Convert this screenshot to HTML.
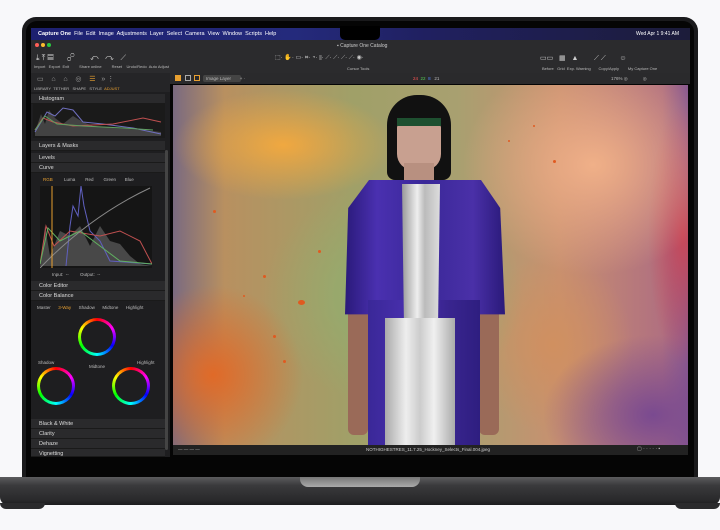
<!DOCTYPE html><html><head><style>
*{margin:0;padding:0;box-sizing:border-box}
body{width:720px;height:530px;background:#f8f8fa;position:relative;overflow:hidden;font-family:"Liberation Sans",sans-serif;color:#ccc}
.a{position:absolute}
.t{position:absolute;font-size:5px;color:#bbb;white-space:nowrap}
.sec{position:absolute;left:31px;width:134px;height:10px;background:#2a2a2c;border-bottom:1px solid #1a1a1a;font-size:5.5px;color:#ddd;padding-left:8px;line-height:10px}
.dot{position:absolute;border-radius:50%;background:#e05a20}
</style></head><body>
<!-- lid -->
<div class="a" style="left:22px;top:17px;width:676px;height:462px;background:#1a1a1c;border-radius:14px 14px 0 0"></div>
<div class="a" style="left:26px;top:21px;width:668px;height:456px;background:#050505;border-radius:11px 11px 0 0"></div>
<!-- base -->
<div class="a" style="left:0;top:477px;width:720px;height:28px;background:linear-gradient(#5c5c5e,#3a3a3c 30%,#2a2a2c 80%,#1c1c1e);border-radius:0 0 8px 8px"></div>
<div class="a" style="left:300px;top:477px;width:120px;height:10px;background:linear-gradient(#777,#aaa);border-radius:0 0 8px 8px"></div>
<div class="a" style="left:0;top:503px;width:45px;height:6px;background:#2a2a2c;border-radius:0 0 6px 6px"></div>
<div class="a" style="left:675px;top:503px;width:45px;height:6px;background:#2a2a2c;border-radius:0 0 6px 6px"></div>
<!-- menu bar -->
<div class="a" style="left:31px;top:28px;width:659px;height:12px;background:linear-gradient(90deg,#1d2070,#242a7c 40%,#202060 60%,#1c1c3a)"></div>
<div class="t" style="left:38px;top:31px;color:#fff;font-size:5.5px"> <b>Capture One</b>&nbsp; File&nbsp; Edit&nbsp; Image&nbsp; Adjustments&nbsp; Layer&nbsp; Select&nbsp; Camera&nbsp; View&nbsp; Window&nbsp; Scripts&nbsp; Help</div>
<div class="a" style="left:340px;top:26px;width:40px;height:14px;background:#000;border-radius:0 0 5px 5px"></div>
<div class="t" style="left:636px;top:31px;color:#fff;font-size:5px">Wed Apr 1 9:41 AM</div>
<!-- toolbar -->
<div class="a" style="left:31px;top:40px;width:659px;height:33px;background:#2b2b2d"></div>
<div class="a" style="left:35px;top:43px;width:4px;height:4px;border-radius:2px;background:#fe5f57"></div>
<div class="a" style="left:41px;top:43px;width:4px;height:4px;border-radius:2px;background:#febc2e"></div>
<div class="a" style="left:47px;top:43px;width:4px;height:4px;border-radius:2px;background:#28c840"></div>
<div class="t" style="left:337px;top:43px;color:#ccc">▪ Capture One Catalog</div>
<div class="t" style="left:34px;top:64px;font-size:4px">Import&nbsp;&nbsp; Export&nbsp; Exit&nbsp;&nbsp;&nbsp;&nbsp;&nbsp;&nbsp;&nbsp;&nbsp; Share online&nbsp;&nbsp;&nbsp;&nbsp;&nbsp;&nbsp;&nbsp;&nbsp; Reset&nbsp;&nbsp;&nbsp; Undo/Redo&nbsp; Auto Adjust</div>
<div class="t" style="left:36px;top:53px;font-size:8px;color:#ddd">⤓ ⤒ ▤&nbsp;&nbsp;&nbsp;&nbsp;&nbsp; ☍&nbsp;&nbsp;&nbsp;&nbsp;&nbsp;&nbsp; ↶&nbsp;&nbsp; ↷&nbsp;&nbsp; ⟋</div>
<div class="t" style="left:275px;top:54px;font-size:6px;color:#ccc">⬚· <span style="color:#f0a020">✋</span>· ▭· ⌗· ◔· ⫴· ⟋· ⟋· ⟋· ⟋· ◉·</div>
<div class="t" style="left:347px;top:66px;font-size:4px">Cursor Tools</div>
<div class="t" style="left:540px;top:54px;font-size:7px;color:#ccc">▭▭&nbsp;&nbsp; ▦&nbsp;&nbsp; ▲&nbsp;&nbsp;&nbsp;&nbsp;&nbsp;&nbsp;&nbsp; ⟋ ⟋&nbsp;&nbsp;&nbsp;&nbsp;&nbsp;&nbsp; ☺</div>
<div class="t" style="left:542px;top:66px;font-size:4px">Before&nbsp;&nbsp; Grid&nbsp; Exp. Warning&nbsp;&nbsp;&nbsp;&nbsp;&nbsp;&nbsp; Copy/Apply&nbsp;&nbsp;&nbsp;&nbsp;&nbsp;&nbsp;&nbsp; My Capture One</div>
<!-- tool tabs -->
<div class="a" style="left:31px;top:73px;width:139px;height:19px;background:#252527"></div>
<div class="t" style="left:34px;top:86px;font-size:4px">LIBRARY&nbsp; TETHER&nbsp;&nbsp; SHAPE&nbsp;&nbsp; STYLE&nbsp; <span style="color:#e8a030">ADJUST</span></div>
<div class="t" style="left:37px;top:75px;font-size:7px;color:#999">▭&nbsp;&nbsp;&nbsp; ⌂&nbsp;&nbsp;&nbsp; ⌂&nbsp;&nbsp;&nbsp; ◎&nbsp;&nbsp;&nbsp; <span style="color:#e8a030">☰</span>&nbsp;&nbsp; » ⋮</div>
<!-- viewer strip -->
<div class="a" style="left:170px;top:73px;width:520px;height:11px;background:#2a2a2c"></div>
<div class="a" style="left:175px;top:75px;width:6px;height:6px;background:#e8a030"></div>
<div class="a" style="left:185px;top:75px;width:6px;height:6px;border:1px solid #aaa"></div>
<div class="a" style="left:194px;top:75px;width:6px;height:6px;border:1px solid #e8a030"></div>
<div class="a" style="left:203px;top:75px;width:38px;height:7px;background:#444;border-radius:2px"></div>
<div class="t" style="left:206px;top:76px;font-size:4.5px">Image Layer&nbsp;&nbsp;&nbsp;&nbsp;&nbsp;&nbsp; + ·</div>
<div class="t" style="left:413px;top:76px;font-size:4.5px"><span style="color:#f55">24</span>&nbsp; <span style="color:#5c5">22</span>&nbsp; <span style="color:#58f">8</span>&nbsp;&nbsp; 21</div>
<div class="t" style="left:611px;top:76px;font-size:4.5px">176% ◎&nbsp;&nbsp;&nbsp;&nbsp;&nbsp;&nbsp;&nbsp;&nbsp;&nbsp;&nbsp;&nbsp; ◎</div>
<!-- left panel -->
<div class="a" style="left:31px;top:92px;width:139px;height:365px;background:#1e1e20"></div>
<div class="sec" style="top:94px">Histogram</div>
<svg class="a" style="left:33px;top:104px" width="132" height="34"><rect width="132" height="34" fill="#1a1a1a"/>
<path d="M2 28 L8 10 L12 20 L16 6 L22 14 L30 20 L40 12 L50 18 L60 22 L80 24 L110 26 L128 28 V32 H2Z" fill="#555" opacity=".7"/>
<path d="M2 28 L14 8 L22 12 L30 4 L40 6 L50 18 L70 20 L100 24 L128 30" stroke="#7070c0" fill="none"/>
<path d="M2 26 L10 14 L20 18 L40 22 L80 20 L110 14 L128 18" stroke="#c05050" fill="none"/>
<path d="M2 26 L12 12 L24 20 L50 22 L90 24 L120 26" stroke="#60a060" fill="none"/></svg>
<div class="sec" style="top:141px">Layers &amp; Masks</div>
<div class="sec" style="top:153px">Levels</div>
<div class="sec" style="top:163px">Curve</div>
<div class="t" style="left:43px;top:177px;font-size:4.5px"><span style="color:#e8a030">RGB</span>&nbsp;&nbsp;&nbsp;&nbsp;&nbsp;&nbsp;&nbsp;&nbsp; Luma&nbsp;&nbsp;&nbsp;&nbsp;&nbsp;&nbsp;&nbsp; Red&nbsp;&nbsp;&nbsp;&nbsp;&nbsp;&nbsp;&nbsp; Green&nbsp;&nbsp;&nbsp;&nbsp;&nbsp;&nbsp; Blue</div>
<svg class="a" style="left:40px;top:186px" width="112" height="82"><rect width="112" height="82" fill="#151515"/>
<path d="M0 80 L5 40 L10 70 L20 45 L30 50 L40 40 L50 60 L60 40 L70 55 L80 58 L90 70 L100 78 L112 80Z" fill="#555" opacity=".8"/>
<path d="M26 80 L30 40 L33 20 L38 30 L41 0 L44 20 L50 45 L60 55 L70 75 L112 78" stroke="#6060c0" fill="none"/>
<path d="M0 78 L6 40 L14 60 L30 45 L60 50 L80 45 L100 55 L112 78" stroke="#c05050" fill="none"/>
<path d="M0 78 L8 42 L20 55 L40 45 L60 60 L80 75 L112 78" stroke="#60b060" fill="none"/>
<path d="M0 82 Q50 30 110 2" stroke="#888" fill="none"/><line x1="12" y1="0" x2="12" y2="82" stroke="#e8a030"/></svg>
<div class="t" style="left:52px;top:272px;font-size:4.5px">Input:&nbsp; --&nbsp;&nbsp;&nbsp;&nbsp;&nbsp;&nbsp;&nbsp;&nbsp; Output:&nbsp; --</div>
<div class="sec" style="top:281px">Color Editor</div>
<div class="sec" style="top:291px">Color Balance</div>
<div class="t" style="left:37px;top:305px;font-size:4.5px">Master&nbsp;&nbsp;&nbsp;&nbsp;&nbsp; <span style="color:#e8a030">3-Way</span>&nbsp;&nbsp;&nbsp;&nbsp;&nbsp; Shadow&nbsp;&nbsp;&nbsp;&nbsp;&nbsp; Midtone&nbsp;&nbsp;&nbsp;&nbsp;&nbsp; Highlight</div>
<div class="a" style="left:78px;top:318px;width:38px;height:38px;border-radius:50%;background:conic-gradient(red,#f0f,blue,cyan,lime,yellow,red);"><div class="a" style="left:3px;top:3px;width:32px;height:32px;border-radius:50%;background:#1e1e20"></div></div>
<div class="a" style="left:37px;top:367px;width:38px;height:38px;border-radius:50%;background:conic-gradient(red,#f0f,blue,cyan,lime,yellow,red);"><div class="a" style="left:3px;top:3px;width:32px;height:32px;border-radius:50%;background:#1e1e20"></div></div>
<div class="a" style="left:112px;top:367px;width:38px;height:38px;border-radius:50%;background:conic-gradient(red,#f0f,blue,cyan,lime,yellow,red);"><div class="a" style="left:3px;top:3px;width:32px;height:32px;border-radius:50%;background:#1e1e20"></div></div>
<div class="t" style="left:38px;top:360px;font-size:4.5px">Shadow</div>
<div class="t" style="left:137px;top:360px;font-size:4.5px">Highlight</div>
<div class="t" style="left:89px;top:364px;font-size:4.5px">Midtone</div>
<div class="sec" style="top:419px">Black &amp; White</div>
<div class="sec" style="top:429px">Clarity</div>
<div class="sec" style="top:439px">Dehaze</div>
<div class="sec" style="top:449px;height:8px">Vignetting</div>
<div class="a" style="left:165px;top:150px;width:3px;height:300px;background:#444;border-radius:2px"></div>
<!-- image -->
<div class="a" style="left:173px;top:85px;width:515px;height:360px;overflow:hidden;background:
radial-gradient(ellipse 110px 55px at 110px 60px,#f0a840,transparent),
radial-gradient(ellipse 130px 110px at 220px 210px,#90b070,transparent),
radial-gradient(ellipse 90px 90px at 40px 290px,#e06a28,transparent),
radial-gradient(ellipse 130px 110px at 420px 80px,#f0b088,transparent),
radial-gradient(ellipse 35px 130px at 510px 150px,#c84858,transparent),
radial-gradient(ellipse 110px 80px at 480px 330px,#7a4a90,transparent),
radial-gradient(ellipse 80px 90px at 380px 260px,#d09060,transparent),
linear-gradient(90deg,#7a6a80,#b89060 10%,#a0a068 35%,#a8a070 55%,#c89070 75%,#b07080 95%,#8a5a90)">
<div class="dot" style="left:125px;top:215px;width:7px;height:5px"></div>
<div class="dot" style="left:90px;top:190px;width:3px;height:3px"></div>
<div class="dot" style="left:100px;top:250px;width:3px;height:3px"></div>
<div class="dot" style="left:145px;top:165px;width:3px;height:3px"></div>
<div class="dot" style="left:70px;top:210px;width:2px;height:2px"></div>
<div class="dot" style="left:380px;top:75px;width:3px;height:3px"></div>
<div class="dot" style="left:360px;top:40px;width:2px;height:2px"></div>
<div class="dot" style="left:335px;top:55px;width:2px;height:2px"></div>
<div class="dot" style="left:110px;top:275px;width:3px;height:3px"></div>
<div class="dot" style="left:40px;top:125px;width:3px;height:3px"></div>
</div>
<!-- figure -->
<div class="a" style="left:387px;top:95px;width:64px;height:85px;background:#111;border-radius:30px 30px 8px 8px"></div>
<div class="a" style="left:397px;top:122px;width:44px;height:48px;background:#c8a090;border-radius:6px 6px 16px 16px"></div>
<div class="a" style="left:397px;top:118px;width:44px;height:8px;background:#1e5030"></div>
<div class="a" style="left:404px;top:163px;width:30px;height:22px;background:#b89080"></div>
<!-- sleeves + arms -->
<div class="a" style="left:348px;top:300px;width:20px;height:135px;background:#9a6a58;border-radius:6px"></div>
<div class="a" style="left:479px;top:300px;width:20px;height:135px;background:#9a6a58;border-radius:6px"></div>
<div class="a" style="left:345px;top:180px;width:160px;height:140px;background:linear-gradient(90deg,#2a1a7a,#4a30b0 20%,#3a2898 50%,#4a30a8 80%,#2a1a7a);clip-path:polygon(15% 0,85% 0,97% 20%,100% 96%,0 96%,2% 20%)"></div>
<div class="a" style="left:368px;top:300px;width:112px;height:145px;background:linear-gradient(90deg,#3a2898,#4a30b0 40%,#3a2590 70%,#2e1e80)"></div>
<!-- shirt & trousers -->
<div class="a" style="left:402px;top:184px;width:38px;height:136px;background:linear-gradient(90deg,#999,#eee 40%,#bbb 60%,#ddd);clip-path:polygon(0 0,100% 0,95% 100%,5% 100%)"></div>
<div class="a" style="left:385px;top:318px;width:70px;height:127px;background:linear-gradient(90deg,#aaa,#eee 30%,#ccc 50%,#f0f0f0 70%,#aaa)"></div>
<!-- viewer bottom bar -->
<div class="a" style="left:173px;top:445px;width:515px;height:10px;background:#222"></div>
<div class="t" style="left:366px;top:447px;font-size:4.5px;color:#ccc">NOTHIGHESTRES_11.7.25_Hockney_Selects_Final.004.jpeg</div>
<div class="t" style="left:178px;top:447px;font-size:4.5px">— — — —</div>
<div class="t" style="left:637px;top:446px;font-size:5px">▢ · · · · · ▪</div>
</body></html>
